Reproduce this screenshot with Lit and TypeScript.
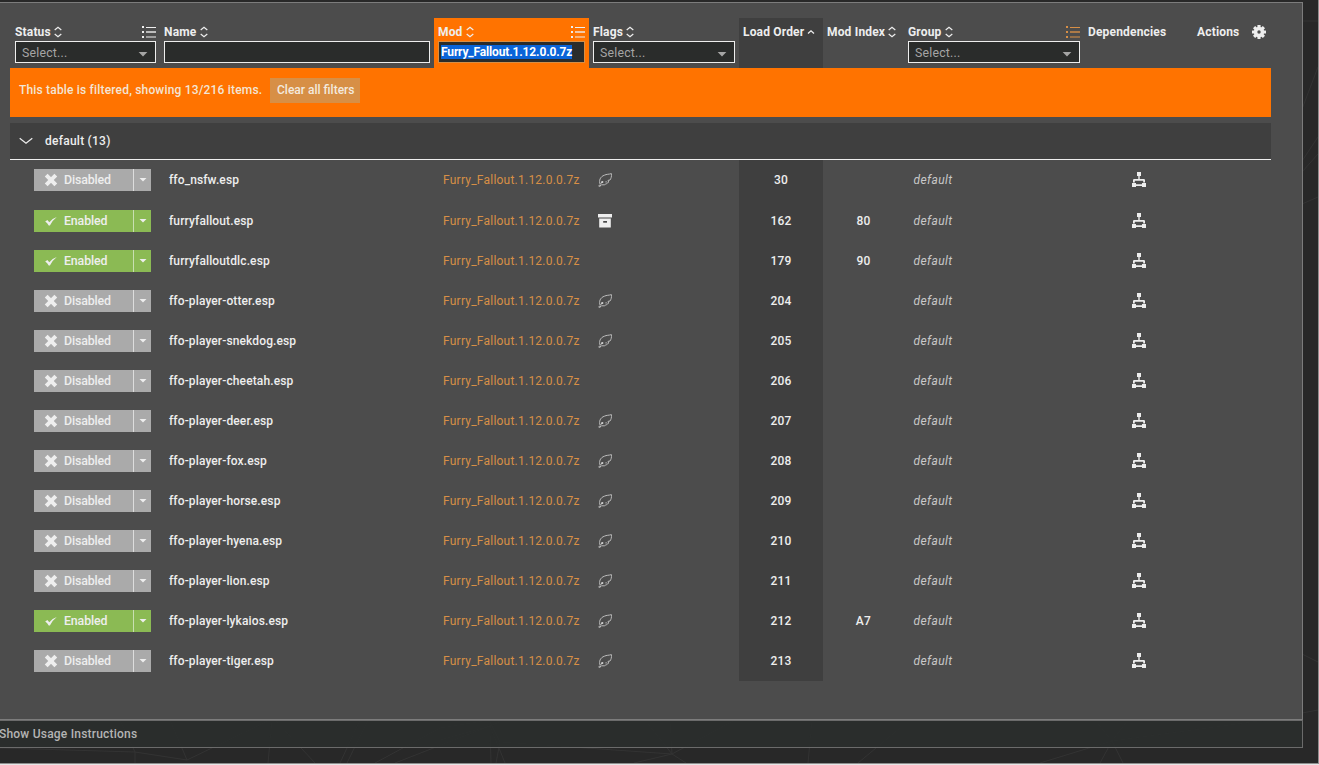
import { LitElement, html, css, svg, nothing } from "lit";
import { customElement } from "lit/decorators.js";

type Flag = "light" | "archive" | "";
interface Plugin { name: string; on: boolean; flag: Flag; order: number; index: string; }

const MOD = "Furry_Fallout.1.12.0.0.7z";
const p = (name: string, order: number, flag: Flag = "light", on = false, index = ""): Plugin => ({ name, on, flag, order, index });

const PLUGINS: Plugin[] = [
  p("ffo_nsfw.esp", 30),
  p("furryfallout.esp", 162, "archive", true, "80"),
  p("furryfalloutdlc.esp", 179, "", true, "90"),
  p("ffo-player-otter.esp", 204),
  p("ffo-player-snekdog.esp", 205),
  p("ffo-player-cheetah.esp", 206, ""),
  p("ffo-player-deer.esp", 207),
  p("ffo-player-fox.esp", 208),
  p("ffo-player-horse.esp", 209),
  p("ffo-player-hyena.esp", 210),
  p("ffo-player-lion.esp", 211),
  p("ffo-player-lykaios.esp", 212, "light", true, "A7"),
  p("ffo-player-tiger.esp", 213),
];

const sortIcon = html`<svg class="sort" width="8" height="12" viewBox="0 0 8 12"><path d="M.7 4 4 1.2 7.3 4M.7 8 4 10.8 7.3 8" fill="none" stroke="currentColor" stroke-width="1.2"/></svg>`;
const ascIcon = html`<svg class="sort" width="8" height="12" viewBox="0 0 8 12"><path d="M1 7.5 4 4.8 7 7.5" fill="none" stroke="currentColor" stroke-width="1.3"/></svg>`;
const listIcon = html`<svg class="list" width="14" height="12" viewBox="0 0 14 12" fill="currentColor"><path d="M0 0h2v2H0zM0 5h2v2H0zM0 10h2v2H0zM4 1h10v1H4zM4 10.5h10v1H4z"/><path d="M4 5h10v2H4z" opacity=".7"/></svg>`;
const gearIcon = html`<svg class="gear" width="14" height="14" viewBox="-7 -7 14 14"><g fill="currentColor">${[0, 45, 90, 135].map(a => svg`<rect x="-1.6" y="-7" width="3.2" height="14" rx=".4" transform="rotate(${a})"/>`)}<circle r="5.2"/></g><circle r="1.7" fill="#4c4c4c"/></svg>`;
const crossIcon = html`<svg width="14" height="14" viewBox="0 0 14 14"><path d="M2.2 2.2 11.8 11.8M11.8 2.2 2.2 11.8" stroke="currentColor" stroke-width="4"/></svg>`;
const checkIcon = html`<svg width="14" height="14" viewBox="0 0 14 14"><path d="M1.2 7.4 3.4 6 5.3 8.3Q7.8 4.6 12.8 3 8.4 6.4 5.9 11.4L4.7 11.4Q3.4 8.9 1.2 7.4Z" fill="currentColor"/></svg>`;
const caretIcon = html`<svg width="8" height="4" viewBox="0 0 8 4"><path d="M.5 0h7L4 3.5z" fill="currentColor"/></svg>`;
const featherIcon = html`<svg width="14" height="14" viewBox="0 0 14 14" fill="none" stroke="#c0c0c0" stroke-width=".95"><path d="M13.4.6C13.8 3.4 13 5.6 12 7L10 7.4 10.6 9C9.4 10.8 7.6 10.8 6.4 11.8L3.6 11.8 1 13.4M.4 12.9H2.8M2.2 11.4C.6 7.6 2.2 3.6 6.4 2.2 8.4 1.1 11 1.4 13.4.6M2.2 11.4 5 8"/><path d="M3.2 8.2h2v1.8h-2zM7.6 8.2h1v1.2h-1z" fill="#ccc" stroke="none"/></svg>`;
const archiveIcon = html`<svg width="14" height="14" viewBox="0 0 14 14"><path d="M0 0h14v3.6H0zM1.2 4.5h11.6V13.6H1.2z" fill="#eee"/><path d="M1.2 3.6h11.6v.9H1.2z" fill="#999"/><path d="M5.2 7h3.8v1.7H5.2z" fill="#484848"/></svg>`;
const treeIcon = html`<svg width="14" height="15" viewBox="0 0 14 15"><g fill="#eee"><path d="M5 0h4v4H5zM0 11h4v4H0zM10 11h4v4h-4zM6.3 4h1.4v3.2H6.3z"/><path d="M1 10.4V8Q1 7 2.2 7H11.8Q13 7 13 8V10.4H11.2V8.8H2.8V10.4zM4 12.2h6v1.7H4z"/></g></svg>`;

@customElement("app-root")
export class AppRoot extends LitElement {
  static styles = css`
    :host { display: block; height: 765px; overflow: hidden; background: #e6e6e6; font: 500 12px/20px Roboto, sans-serif; color: #eee; }
    * { box-sizing: border-box; }
    svg { display: block; flex: none; }
    .window { display: grid; width: 1319px; height: 764px; padding-top: 2px; grid-template-rows: 718px 28px; align-content: start; background: #282828; border-right: 1px solid #8e8e8e; border-bottom: 1px solid #8e8e8e; isolation: isolate; position: relative; }
    .mesh { position: absolute; z-index: -1; inset: 0; }
    .panel { width: 1303px; background: #4c4c4c; border: 1px solid #7c7c7c; border-left: 0; padding: 15px 0 0 10px; }
    .table { width: 1261px; }
    .cols { display: grid; grid-template-columns: 149px 275px 155px 150px 84px 81px 180px 109px 78px; }
    .head { height: 50px; }
    .th { padding: 7px 4px 0 4px; font-weight: 700; letter-spacing: .17px; min-width: 0; }
    .th.status { padding: 7px 3px 0 5px; }
    .th.name { padding-left: 5px; }
    .th.name .sort { margin-left: 4px; }
    .th.mod { background: #ff7300; }
    .th.load { background: #3f3f3f; }
    .title { display: flex; align-items: center; height: 14px; white-space: nowrap; }
    .sort { margin-left: 3px; }
    .list { margin-left: auto; }
    .gear { margin-left: 13px; }
    .gold { color: #d78f46; }
    .field { display: flex; align-items: center; justify-content: space-between; height: 22px; margin-top: 2px; border: 1px solid #eee; background: #2a2c2b; color: #a5a5a5; font-weight: 400; padding: 1px 7px 0 6px; letter-spacing: .2px; font-size: 12.3px; }
    .field svg { width: 10px; height: 5px; margin-top: 3px; }
    .mod .field { border-color: #d78f46; padding: 0 2px; font-size: 12px; }
    .sel { background: #0a64d8; color: #fff; font-weight: 700; line-height: 14px; letter-spacing: -.15px; }
    .banner { display: flex; height: 49px; background: #ff7300; padding: 10px 9px; margin-bottom: 6px; }
    .banner span { line-height: 25px; letter-spacing: .18px; color: #f3e5d6; }
    .clear { width: 90px; height: 25px; margin-left: 8px; padding: 0 0 0 1px; border: 0; background: #d78f46; color: #f3eadf; font: 500 12px/25px Roboto, sans-serif; }
    .grp { display: flex; align-items: center; height: 37px; background: #3f3f3f; border-bottom: 1px solid #eee; padding: 0 0 0 9px; letter-spacing: .25px; }
    .grp svg { margin-right: 12px; }
    .row { height: 40px; }
    .row:first-child { height: 41px; }
    .row:first-child .td { height: 41px; }
    .td { display: flex; height: 40px; padding: 9px 0 9px; line-height: 22px; white-space: nowrap; }
    .state { padding-left: 24px; }
    .td.name { padding-left: 10px; letter-spacing: .12px; }
    .link { padding-left: 9px; color: #d78f46; font-weight: 400; letter-spacing: .23px; }
    .flag { padding: 13px 0 0 9px; }
    .order, .idx { justify-content: center; letter-spacing: .25px; }
    .order { background: #3f3f3f; }
    .gname { padding-left: 9.5px; font-style: italic; color: #c8c8c8; letter-spacing: .4px; font-weight: 400; }
    .tree { padding: 12px 0 0 48px; }
    .btn { display: flex; width: 99px; height: 22px; background: #aaa; align-items: center; padding-left: 10px; gap: 6px; font-size: 12.4px; letter-spacing: -.15px; }
    .drop { display: flex; width: 18px; height: 22px; background: #aaa; border-left: 1px solid #ddd; align-items: center; justify-content: center; }
    .on { background: #8bba54; }
    .drop.on { border-color: #c9dfb2; }
    .usage { width: 1303px; background: rgba(42, 45, 44, .88); border: 1px solid #6b6b6b; border-left: 0; line-height: 26px; color: #b4b4b4; letter-spacing: .21px; }
    .usage span { margin-left: -1px; }
  `;

  private select() {
    return html`<div class="field"><span>Select...</span>${caretIcon}</div>`;
  }

  private row(r: Plugin) {
    const on = r.on ? "on" : "";
    return html`<div class="cols row">
      <div class="td state"><div class="btn ${on}">${r.on ? checkIcon : crossIcon}<span>${r.on ? "Enabled" : "Disabled"}</span></div><div class="drop ${on}">${caretIcon}</div></div>
      <div class="td name">${r.name}</div>
      <div class="td link">${MOD}</div>
      <div class="td flag">${r.flag === "light" ? featherIcon : r.flag === "archive" ? archiveIcon : nothing}</div>
      <div class="td order">${r.order}</div>
      <div class="td idx">${r.index}</div>
      <div class="td gname">default</div>
      <div class="td tree">${treeIcon}</div>
    </div>`;
  }

  render() {
    return html`<div class="window">
      <svg class="mesh" width="1318" height="763" fill="none" stroke="#333"><path d="M0 748 135 752 187 760 270 720M135 763V752L120 720M187 760 170 720M268 763 272 720M275 720 315 763M340 763 360 720M347 763 368 720M375 763 440 728 490 720M395 763 500 722M440 740 490 726 491 763M490 726 505 763M490 722 500 742 672 754 645 720M500 742 496 763M672 754 735 720M670 720 672 754 634 763M672 754 686 763M812 720 808 763M858 763 900 728M1040 763 1112 741 1303 715M1112 741 1100 763M1112 741 1123 763M1112 741 1095 720M1112 741 1128 720M1302 21H1318M1302 109 1318 67M1302 161 1318 137M1302 172 1318 154M1302 204 1318 197M1302 654 1318 662M1302 713 1318 710"/></svg>
      <div class="panel"><div class="table">
        <div class="cols head">
          <div class="th status"><div class="title">Status${sortIcon}${listIcon}</div>${this.select()}</div>
          <div class="th name"><div class="title">Name${sortIcon}</div><div class="field"></div></div>
          <div class="th mod"><div class="title">Mod${sortIcon}${listIcon}</div><div class="field"><span class="sel">${MOD}</span></div></div>
          <div class="th"><div class="title">Flags${sortIcon}</div>${this.select()}</div>
          <div class="th load"><div class="title">Load Order${ascIcon}</div></div>
          <div class="th"><div class="title">Mod Index${sortIcon}</div></div>
          <div class="th"><div class="title">Group${sortIcon}<span class="list gold">${listIcon}</span></div>${this.select()}</div>
          <div class="th"><div class="title">Dependencies</div></div>
          <div class="th"><div class="title">Actions${gearIcon}</div></div>
        </div>
        <div class="banner"><span>This table is filtered, showing 13/216 items.</span><button class="clear">Clear all filters</button></div>
        <div class="grp"><svg width="14" height="8" viewBox="0 0 14 8"><path d="M.7 1.3 7 6.2 13.3 1.3" fill="none" stroke="currentColor" stroke-width="1.2"/></svg>default (13)</div>
        <div>${PLUGINS.map(r => this.row(r))}</div>
      </div></div>
      <div class="usage"><span>Show Usage Instructions</span></div>
    </div>`;
  }
}
